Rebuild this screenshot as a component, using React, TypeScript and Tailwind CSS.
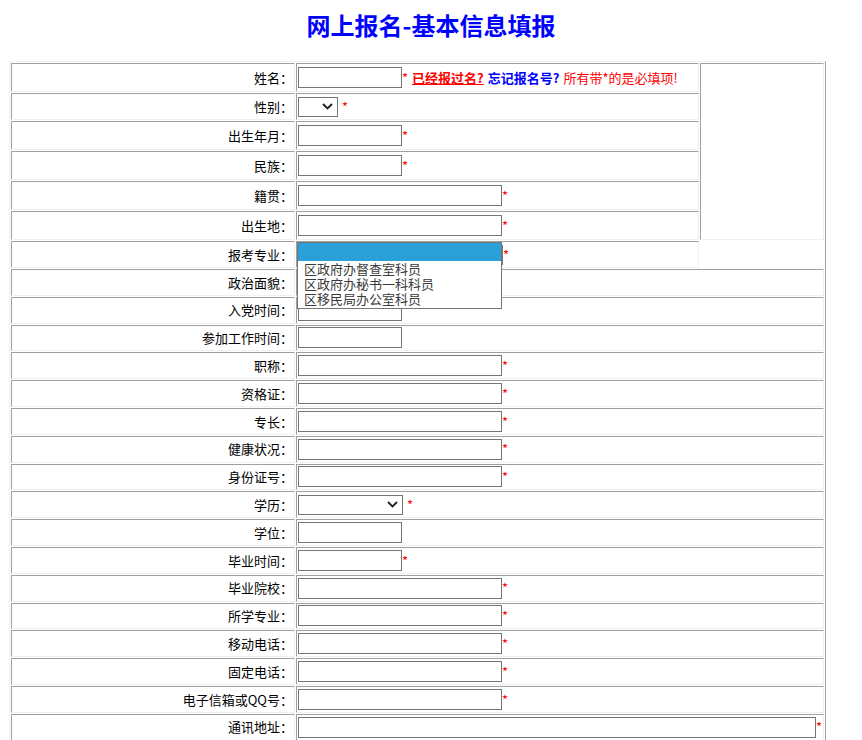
import React from "react";

type Kind = "short" | "long" | "addr" | "selSm" | "sel" | "major" | "first";

interface Row {
  label: string;
  kind: Kind;
  star?: boolean;
  h: string;
}

const rows: Row[] = [
  { label: "姓名：", kind: "first", h: "h-[25px]" },
  { label: "性别：", kind: "selSm", star: true, h: "h-[23px]" },
  { label: "出生年月：", kind: "short", star: true, h: "h-[25px]" },
  { label: "民族：", kind: "short", star: true, h: "h-[25px]" },
  { label: "籍贯：", kind: "long", star: true, h: "h-[25px]" },
  { label: "出生地：", kind: "long", star: true, h: "h-[25px]" },
  { label: "报考专业：", kind: "major", star: true, h: "h-[23px]" },
  { label: "政治面貌：", kind: "short", h: "h-[22.8px]" },
  { label: "入党时间：", kind: "short", h: "h-[22.8px]" },
  { label: "参加工作时间：", kind: "short", h: "h-[22.8px]" },
  { label: "职称：", kind: "long", star: true, h: "h-[22.8px]" },
  { label: "资格证：", kind: "long", star: true, h: "h-[22.8px]" },
  { label: "专长：", kind: "long", star: true, h: "h-[22.8px]" },
  { label: "健康状况：", kind: "long", star: true, h: "h-[22.8px]" },
  { label: "身份证号：", kind: "long", star: true, h: "h-[22.8px]" },
  { label: "学历：", kind: "sel", star: true, h: "h-[22.8px]" },
  { label: "学位：", kind: "short", h: "h-[22.8px]" },
  { label: "毕业时间：", kind: "short", star: true, h: "h-[22.8px]" },
  { label: "毕业院校：", kind: "long", star: true, h: "h-[22.8px]" },
  { label: "所学专业：", kind: "long", star: true, h: "h-[22.8px]" },
  { label: "移动电话：", kind: "long", star: true, h: "h-[22.8px]" },
  { label: "固定电话：", kind: "long", star: true, h: "h-[22.8px]" },
  { label: "电子信箱或QQ号：", kind: "long", star: true, h: "h-[22.8px]" },
  { label: "通讯地址：", kind: "addr", star: true, h: "h-[22.8px]" },
];

const majors = ["区政府办督查室科员", "区政府办秘书一科科员", "区移民局办公室科员"];

const cell =
  "p-px border border-t-[#a0a0a0] border-l-[#a0a0a0] border-r-[#f0f0f0] border-b-[#f0f0f0]";

function Star() {
  return <span className="text-[#ff0000]">*</span>;
}

function TextBox({ w }: { w: string }) {
  return <input type="text" className={`${w} h-[21px] border border-[#767676] bg-white px-0.5 outline-none`} />;
}

function FakeSelect({ w }: { w: string }) {
  return (
    <div className={`${w} h-[20px] border border-[#767676] bg-white flex items-center justify-end pr-[4px]`}>
      <svg width="11" height="7" viewBox="0 0 11 7">
        <path d="M1 1l4.5 4.5L10 1" fill="none" stroke="#1f1f1f" strokeWidth="1.8" />
      </svg>
    </div>
  );
}

function Field({ row }: { row: Row }) {
  switch (row.kind) {
    case "first":
      return (
        <>
          <TextBox w="w-[104px]" />
          <Star />
          <span className="ml-[4px] font-bold text-[#ff0000] underline">已经报过名?</span>
          <span className="ml-[4px] font-bold text-[#0000ff]">忘记报名号?</span>
          <span className="ml-[4px] text-[#ff0000]">所有带*的是必填项!</span>
        </>
      );
    case "selSm":
      return (
        <>
          <FakeSelect w="w-[40px]" />
          <span className="ml-[4px]"><Star /></span>
        </>
      );
    case "sel":
      return (
        <>
          <FakeSelect w="w-[105px]" />
          <span className="ml-[4px]"><Star /></span>
        </>
      );
    case "major":
      return (
        <>
          <FakeSelect w="w-[205px]" />
          <Star />
          {/* open dropdown list of the 报考专业 select */}
          <div className="absolute left-0 top-0 z-10 w-[205px] border border-[#767676] bg-white pb-[2px] text-[#3a3a3a]">
            <div className="h-[18px] bg-[#2a9fd8]" />
            {majors.map((m) => (
              <div key={m} className="h-[15px] pl-[6px] leading-[15px]">
                {m}
              </div>
            ))}
          </div>
        </>
      );
    case "short":
      return (
        <>
          <TextBox w="w-[104px]" />
          {row.star && <Star />}
        </>
      );
    case "long":
      return (
        <>
          <TextBox w="w-[204px]" />
          {row.star && <Star />}
        </>
      );
    case "addr":
      return (
        <>
          <TextBox w="w-[520px]" />
          {row.star && <Star />}
        </>
      );
  }
}

export default function App() {
  return (
    <div
      className="min-h-screen bg-white text-[13px] text-black"
      style={{ fontFamily: '"Noto Sans CJK SC", "Noto Sans", sans-serif' }}
    >
      <div className="h-[49px] flex items-center justify-center text-[24px] font-bold text-[#0000ff]">
        网上报名-基本信息填报
      </div>
      <table className="mt-[12px] ml-[9px] w-[817px] table-fixed border-separate border-spacing-[1px] border border-t-[#f0f0f0] border-l-[#f0f0f0] border-r-[#a0a0a0] border-b-[#a0a0a0]">
        <colgroup>
          <col className="w-[284px]" />
          <col className="w-[403px]" />
          <col className="w-[124px]" />
        </colgroup>
        <tbody>
          {rows.map((row, i) => (
            <tr key={row.label}>
              <td className={cell}>
                <div className={`${row.h} flex items-center justify-end whitespace-nowrap`}>{row.label}</div>
              </td>
              <td className={`${cell} ${row.kind === "major" ? "relative" : ""}`} colSpan={i >= 7 ? 2 : 1}>
                <div className={`${row.h} flex items-center whitespace-nowrap`}>
                  <Field row={row} />
                </div>
              </td>
              {i === 0 && <td className={cell} rowSpan={6} />}
            </tr>
          ))}
        </tbody>
      </table>
    </div>
  );
}
